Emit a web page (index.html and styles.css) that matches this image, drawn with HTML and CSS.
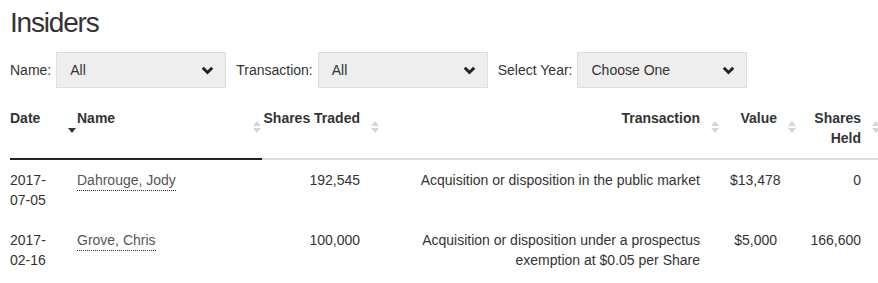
FILE: index.html
```html
<!DOCTYPE html>
<html lang="en">
<head>
  <meta charset="UTF-8">
  <title>Insiders</title>
  <link rel="stylesheet" href="styles.css">
</head>
<body>

  <h1 class="page-title">Insiders</h1>

  <div class="filters">
    <label class="filter-label">Name:</label>
    <div class="select-box">
      <span>All</span>
      <svg class="chevron" width="13" height="9" viewBox="0 0 13 9"><polyline points="1.8,1.8 6.5,6.5 11.2,1.8" fill="none" stroke="#222" stroke-width="3"/></svg>
    </div>

    <label class="filter-label">Transaction:</label>
    <div class="select-box">
      <span>All</span>
      <svg class="chevron" width="13" height="9" viewBox="0 0 13 9"><polyline points="1.8,1.8 6.5,6.5 11.2,1.8" fill="none" stroke="#222" stroke-width="3"/></svg>
    </div>

    <label class="filter-label">Select Year:</label>
    <div class="select-box">
      <span>Choose One</span>
      <svg class="chevron" width="13" height="9" viewBox="0 0 13 9"><polyline points="1.8,1.8 6.5,6.5 11.2,1.8" fill="none" stroke="#222" stroke-width="3"/></svg>
    </div>
  </div>

  <table class="insiders">
    <colgroup>
      <col class="col-date">
      <col class="col-name">
      <col class="col-traded">
      <col class="col-transaction">
      <col class="col-value">
      <col class="col-held">
    </colgroup>
    <thead>
      <tr>
        <th class="active">Date</th>
        <th class="active sortable sorted">Name</th>
        <th class="num sortable nowrap">Shares Traded</th>
        <th class="num sortable">Transaction</th>
        <th class="num sortable">Value</th>
        <th class="num sortable">Shares Held</th>
      </tr>
    </thead>
    <tbody>
      <tr>
        <td>2017-<wbr>07-05</td>
        <td><a class="person" href="#">Dahrouge, Jody</a></td>
        <td class="num">192,545</td>
        <td class="num">Acquisition or disposition in the public market</td>
        <td class="num">$13,478</td>
        <td class="num">0</td>
      </tr>
      <tr>
        <td>2017-<wbr>02-16</td>
        <td><a class="person" href="#">Grove, Chris</a></td>
        <td class="num">100,000</td>
        <td class="num">Acquisition or disposition under a prospectus exemption at $0.05 per Share</td>
        <td class="num">$5,000</td>
        <td class="num">166,600</td>
      </tr>
    </tbody>
  </table>

</body>
</html>
```

FILE: styles.css
```css
body {
  font-family: 'Liberation Sans', Arial, sans-serif;
  font-size: 14px;
  line-height: 20px;
  color: #333;
  margin: 0;
  padding: 0 0 0 10px;
  overflow: hidden;
}

.page-title {
  font-size: 28px;
  font-weight: normal;
  letter-spacing: -1.2px;
  line-height: 32px;
  margin: 7px 0 13px;
}

/* filter bar */
.filters {
  display: flex;
  align-items: center;
}

.filter-label {
  margin-right: 5px;
}

.select-box {
  display: flex;
  align-items: center;
  justify-content: space-between;
  box-sizing: border-box;
  width: 170px;
  height: 36px;
  padding: 0 11px 0 13px;
  margin-right: 10px;
  background: #eee;
  border: 1px solid #ddd;
}

/* table */
.insiders {
  table-layout: fixed;
  border-collapse: collapse;
  width: 871px;
  margin-top: 10px;
}

.col-date { width: 57px; }
.col-name { width: 195px; }
.col-traded { width: 118px; }
.col-transaction { width: 340px; }
.col-value { width: 77px; }
.col-held { width: 84px; }

.insiders th,
.insiders td {
  padding: 10px 20px 10px 10px;
  text-align: left;
  vertical-align: top;
}

.insiders th:first-child,
.insiders td:first-child {
  padding-left: 0;
  padding-right: 10px;
}

.insiders th {
  position: relative;
  font-weight: bold;
  border-bottom: 2px solid #ddd;
}

.insiders th.active {
  border-bottom-color: #222;
}

.insiders .num {
  text-align: right;
}

.insiders th.num {
  padding-left: 0;
}

.nowrap {
  white-space: nowrap;
}

/* sort arrows: up/down pair on every sortable column */
.sortable::after {
  content: "";
  position: absolute;
  right: 1px;
  top: 23px;
  width: 8px;
  height: 12px;
  background: url("data:image/svg+xml;utf8,<svg xmlns='http://www.w3.org/2000/svg' width='8' height='12' viewBox='0 0 8 12'><polygon points='0,5 4,0 8,5' fill='%23d6d6d6'/><polygon points='0,7 8,7 4,12' fill='%23d6d6d6'/></svg>") no-repeat;
}

/* active sort direction */
.sorted::before {
  content: "";
  position: absolute;
  left: 1px;
  top: 30px;
  border-left: 4px solid transparent;
  border-right: 4px solid transparent;
  border-top: 5px solid #333;
}

.person {
  color: #555;
  text-decoration: none;
  border-bottom: 1px dotted #333;
  padding-bottom: 2px;
}
```
